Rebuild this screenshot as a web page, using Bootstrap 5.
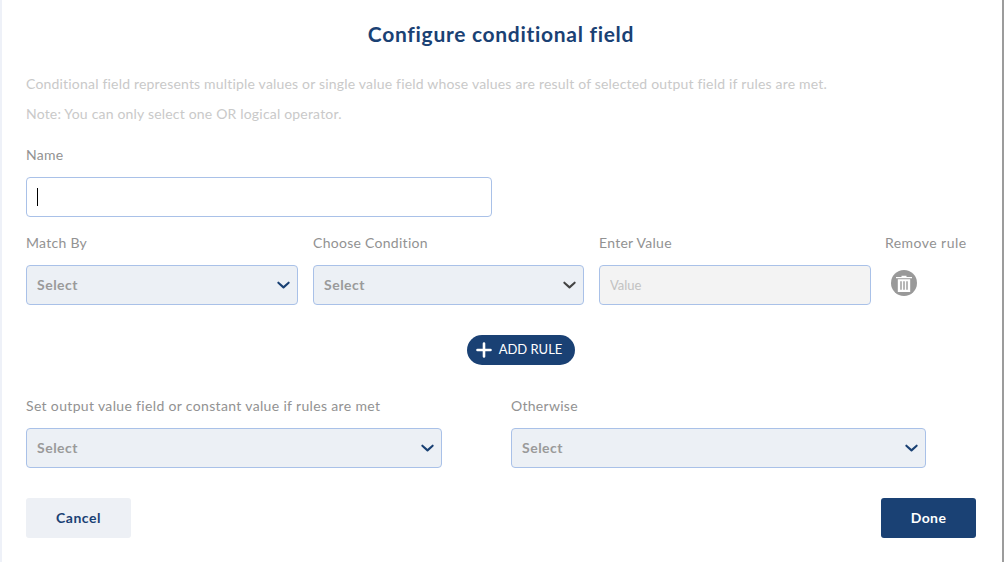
<!DOCTYPE html>
<html lang="en">
<head>
<meta charset="utf-8">
<title>Configure conditional field</title>
<link href="https://cdn.jsdelivr.net/npm/bootstrap@5.3.0/dist/css/bootstrap.min.css" rel="stylesheet">
<style>
html, body { height: 100%; overflow: hidden; }
body { font-family: "Lato", "Noto Sans", sans-serif; background: #fff; }
.dlg { width: 1004px; height: 562px; border-left: 2px solid #eef1f8; border-right: 2px solid #9c9c9c; padding: 21px 26px 0 24px; }
.dlg-title { font-size: 21px; font-weight: 700; color: #1a4174; line-height: 25px; text-align: center; margin: 0; letter-spacing: .7px; }
.hint { font-size: 14px; color: #c9c9c9; line-height: 20px; margin: 0; letter-spacing: .19px; }
.hint-first { margin-top: 28px; }
.hint-next { margin-top: 10px; }
.lbl { font-size: 14px; color: #929292; line-height: 20px; margin: 0 0 12px; letter-spacing: .28px; display: block; }
.lbl-name { margin-top: 21px; }
.lbl-long { letter-spacing: .34px; }
.lbl-end { letter-spacing: .45px; margin-left: -1px; }
.fld { height: 40px; border: 1px solid #a9c1e8; border-radius: 4px; font-size: 14px; padding: 0 10px; box-shadow: none; }
.fld-sel { background-color: #ecf0f5; color: #9a9a9a; font-weight: 700; letter-spacing: .5px; padding-bottom: 2px; background-position: right 6px center; background-size: 15px 15px; background-image: url("data:image/svg+xml,%3csvg xmlns='http://www.w3.org/2000/svg' viewBox='0 0 16 16'%3e%3cpath fill='none' stroke='%231a4174' stroke-width='2.2' stroke-linecap='round' stroke-linejoin='round' d='M2.5 5l5.5 5 5.500-5'/%3e%3c/svg%3e"); }
.fld-dark { background-image: url("data:image/svg+xml,%3csvg xmlns='http://www.w3.org/2000/svg' viewBox='0 0 16 16'%3e%3cpath fill='none' stroke='%23444' stroke-width='2.2' stroke-linecap='round' stroke-linejoin='round' d='M2.5 5l5.5 5 5.500-5'/%3e%3c/svg%3e"); }
.fld-val { background-color: #f3f3f3; font-size: 13px; }
.fld-val::placeholder { color: #c2c2c2; opacity: 1; }
.fld-val:disabled { background-color: #f3f3f3; }
.name-wrap { width: 466px; margin-bottom: 16px; }
.caret-bar { position: absolute; left: 11px; top: 11px; width: 1px; height: 18px; background: #000; }
.rule-grid { display: grid; grid-template-columns: 272px 271px 272px 1fr; column-gap: 15px; }
.bin { width: 26px; height: 26px; margin: 17px 0 0 5px; border-radius: 50%; background: #999; display: flex; align-items: center; justify-content: center; border: 0; padding: 0; }
.add-row { margin: 30px 0 31px; display: flex; justify-content: center; padding-left: 40px; }
.add-btn { width: 108px; height: 30px; border-radius: 15px; background: #1a4174; color: #fff; font-size: 13px; padding: 0 4px 0 0; display: flex; align-items: center; justify-content: center; gap: 7px; border: 0; letter-spacing: 0; }
.out-grid { display: grid; grid-template-columns: 416px 415px; column-gap: 69px; }
.foot { margin-top: 30px; display: flex; justify-content: space-between; }
.btn-cancel { width: 105px; height: 40px; background: #edf0f5; color: #1a4174; font-size: 14px; font-weight: 700; border: 0; border-radius: 3px; padding: 0 0 2px; letter-spacing: .5px; }
.btn-done { width: 95px; height: 40px; background: #1a4174; color: #fff; font-size: 14px; font-weight: 700; border: 0; border-radius: 3px; padding: 0 0 2px; letter-spacing: .4px; }
</style>
</head>
<body>
<div class="dlg">
  <h1 class="dlg-title">Configure conditional field</h1>
  <p class="hint hint-first">Conditional field represents multiple values or single value field whose values are result of selected output field if rules are met.</p>
  <p class="hint hint-next">Note: You can only select one OR logical operator.</p>
  <label class="lbl lbl-name" for="f-name">Name</label>
  <div class="name-wrap position-relative">
    <input id="f-name" class="form-control fld" type="text">
    <span class="caret-bar"></span>
  </div>
  <div class="rule-grid">
    <div><label class="lbl">Match By</label><select class="form-select fld fld-sel"><option>Select</option></select></div>
    <div><label class="lbl">Choose Condition</label><select class="form-select fld fld-sel fld-dark"><option>Select</option></select></div>
    <div><label class="lbl">Enter Value</label><input class="form-control fld fld-val" placeholder="Value" disabled></div>
    <div><label class="lbl lbl-end">Remove rule</label>
      <button class="bin" type="button" aria-label="Remove rule">
        <svg width="16" height="17" viewBox="0 0 16 17"><path fill="#fff" d="M0 2h5.500V.7h5V2H16v1.200H0zM1.800 4.200h12.400V17H1.800z"/><path fill="#999" d="M4.300 6.200h1.400v8.600H4.300zM7.300 6.200h1.400v8.600H7.300zM10.300 6.200h1.400v8.600h-1.400z"/></svg>
      </button>
    </div>
  </div>
  <div class="add-row">
    <button class="btn add-btn" type="button">
      <svg width="16" height="16" viewBox="0 0 16 16"><path fill="none" stroke="#fff" stroke-width="2.6" stroke-linecap="round" d="M8 1.500v13M1.500 8h13"/></svg>
      ADD RULE
    </button>
  </div>
  <div class="out-grid">
    <div><label class="lbl lbl-long">Set output value field or constant value if rules are met</label><select class="form-select fld fld-sel"><option>Select</option></select></div>
    <div><label class="lbl">Otherwise</label><select class="form-select fld fld-sel"><option>Select</option></select></div>
  </div>
  <div class="foot">
    <button class="btn btn-cancel" type="button">Cancel</button>
    <button class="btn btn-done" type="button">Done</button>
  </div>
</div>
<script src="https://cdn.jsdelivr.net/npm/bootstrap@5.3.0/dist/js/bootstrap.bundle.min.js"></script>
</body>
</html>
